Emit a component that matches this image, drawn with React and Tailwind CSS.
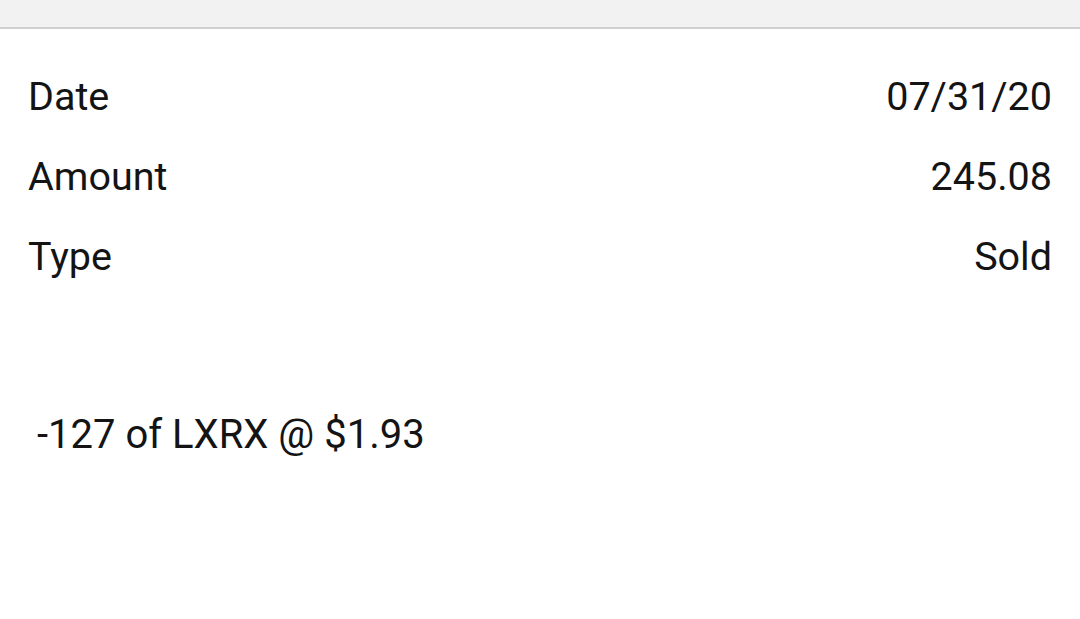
const ROWS = [
  { label: "Date", value: "07/31/20" },
  { label: "Amount", value: "245.08" },
  { label: "Type", value: "Sold" },
];

export default function App() {
  return (
    <div className="h-[619px] w-[1080px] overflow-hidden bg-white font-['Roboto',sans-serif] text-[#141414]">
      <div className="h-[29px] border-b-2 border-[#d0d0d0] bg-[#f2f2f2]" />
      <div className="px-[28px] pt-[28px]">
        {ROWS.map((row) => (
          <div key={row.label} className="flex h-[80px] items-center justify-between text-[39.5px]">
            <span>{row.label}</span>
            <span>{row.value}</span>
          </div>
        ))}
      </div>
      <p className="mt-[113px] pl-[37px] text-[40px] leading-[50px]">-127 of LXRX @ $1.93</p>
    </div>
  );
}
